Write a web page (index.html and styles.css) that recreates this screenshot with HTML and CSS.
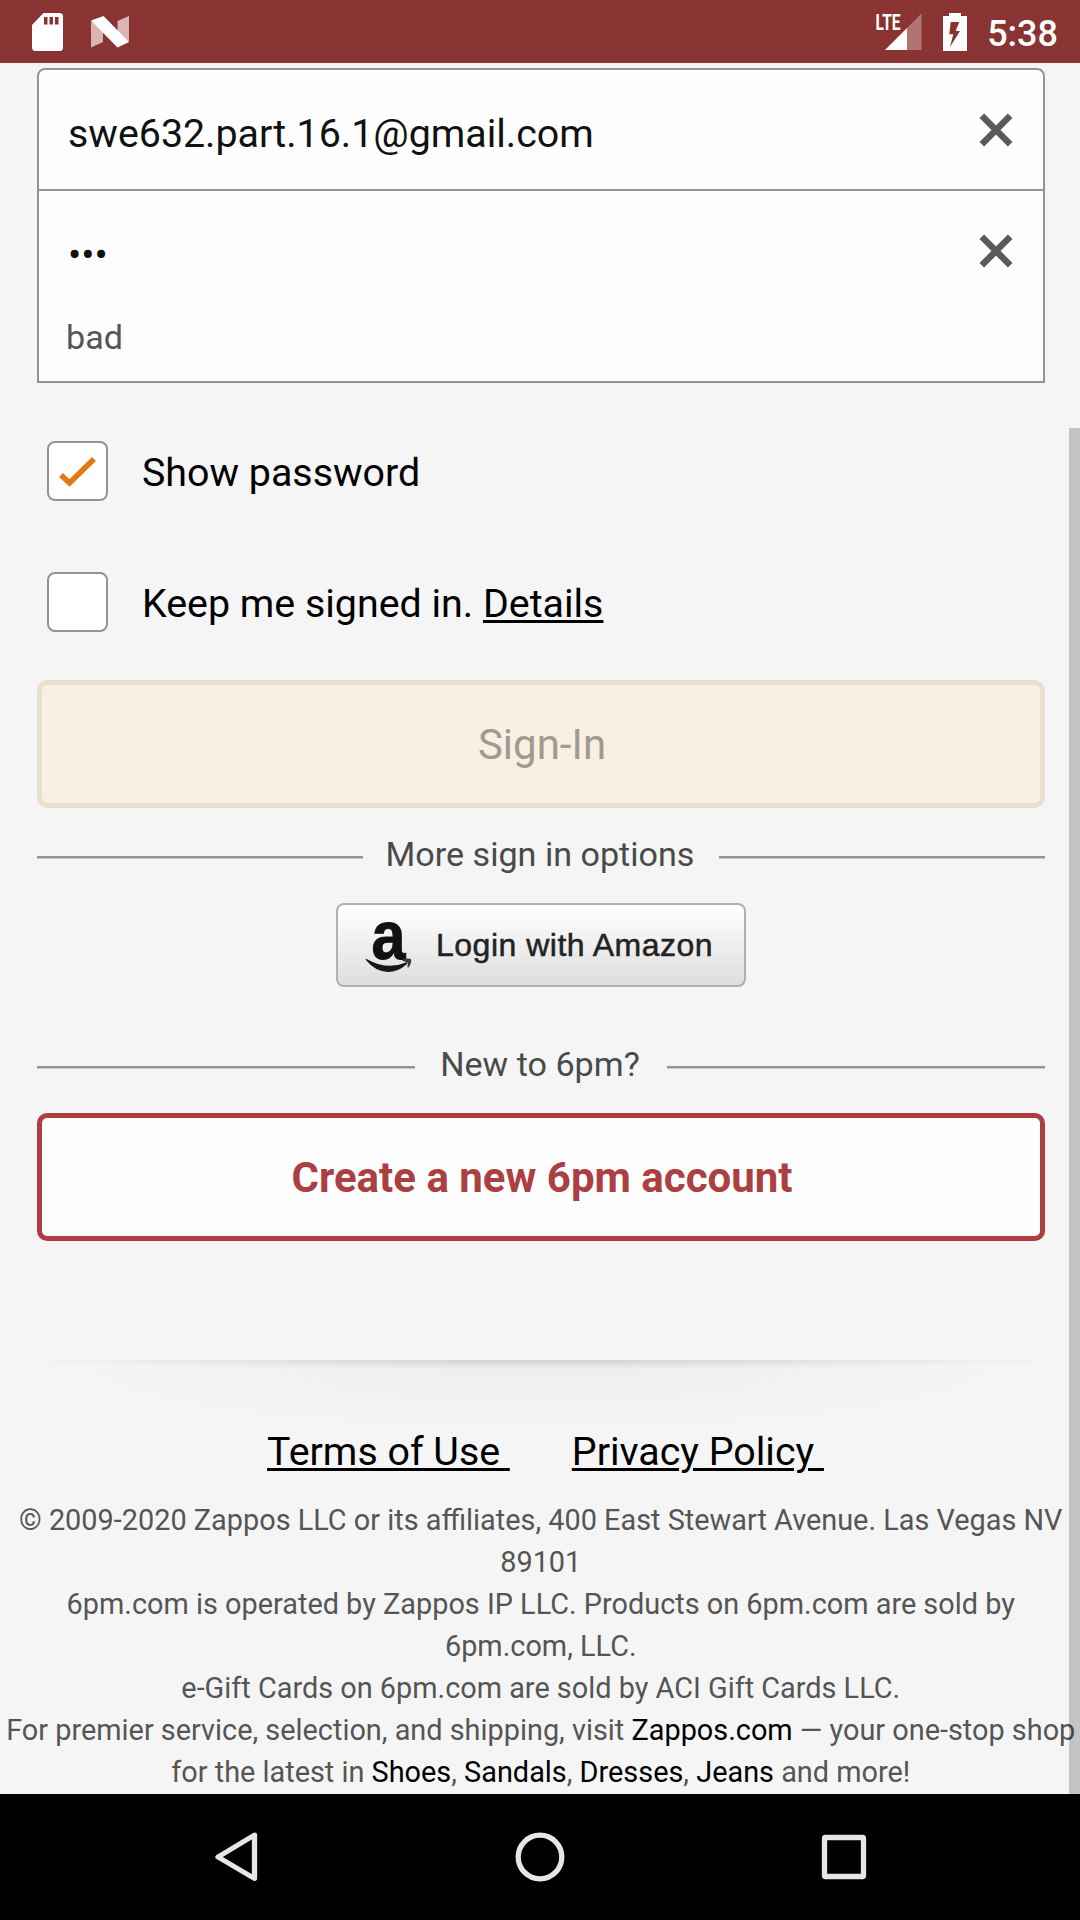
FILE: index.html
```html
<!DOCTYPE html>
<html lang="en">
<head>
<meta charset="utf-8">
<title>6pm Sign-In</title>
<link rel="stylesheet" href="styles.css">
</head>
<body>
<header class="status">
  <div class="status-left">
    <svg width="31" height="38" viewBox="0 0 31 38"><path fill="#fff" fill-rule="evenodd" d="M11.500 0H27.500Q31 0 31 3.500V34.500Q31 38 27.500 38H3.500Q0 38 0 34.500V12ZM12 4V11.500H15.500V4ZM17.500 4V11.500H21V4ZM23 4V11.500H26.500V4Z"/></svg>
    <svg width="38" height="32" viewBox="0 0 38 32"><path fill="#dcb4b4" d="M0 5L12 14V26L0 31.500ZM26.500 5L38 0V26L26.500 18Z"/><path fill="#fff" d="M0 4.500L12.500 0L38 26L26.500 31.500Z"/></svg>
  </div>
  <div class="status-right">
    <svg width="48" height="44" viewBox="-2 -3 48 44"><path fill="#fff" d="M9 37L31 15V37Z"/><path fill="#b07475" d="M31 15L45.500 0.500V37H31Z"/><text class="lte" x="-0.500" y="17" textLength="25" lengthAdjust="spacingAndGlyphs">LTE</text></svg>
    <svg width="24" height="38" viewBox="0 0 24 38"><path fill="#fff" fill-rule="evenodd" d="M6 0H18V3H24V38H0V3H6ZM7.700 9L6.300 21.300H10.300L7 34L17 18H12.700L16.300 9Z"/></svg>
    <span class="clock">5:38</span>
  </div>
</header>

<main class="screen">
  <form class="form">
    <div class="fields">
      <div class="field">
        <span class="value">swe632.part.16.1@gmail.com</span>
        <svg class="clear" width="36" height="36" viewBox="0 0 36 36"><path d="M3.800 3.800L32.200 32.200M32.200 3.800L3.800 32.200"/></svg>
      </div>
      <div class="field second">
        <span class="value">•••</span>
        <svg class="clear" width="36" height="36" viewBox="0 0 36 36"><path d="M3.800 3.800L32.200 32.200M32.200 3.800L3.800 32.200"/></svg>
      </div>
      <div class="preview">bad</div>
    </div>

    <div class="check-row">
      <span class="box"><svg width="56" height="56" viewBox="3 2 56 56"><path d="M15 34L23.500 42L48 18"/></svg></span>
      <span class="check-label">Show password</span>
    </div>
    <div class="check-row">
      <span class="box"></span>
      <span class="check-label">Keep me signed in. <a class="link">Details</a></span>
    </div>

    <div class="button signin">Sign-In</div>

    <div class="divider"><span>More sign in options</span></div>

    <div class="amazon">
      <svg width="50" height="72" viewBox="0 -6 50 72"><text class="amazon-a" x="5.500" y="43.500" textLength="34" lengthAdjust="spacingAndGlyphs">a</text><path fill="#161616" d="M-0.500 44.500Q-0.500 43.500 1 44.200Q21 55.500 40 47.500Q42.500 47 41 49Q32 57 22 57Q9 56.500 -0.500 44.500Z"/><path fill="#3a3a3a" d="M36 45.500Q40 42.500 45 44Q46 48 42.500 52.500Q41 53 41.500 51L42 48Z"/></svg>
      <span>Login with Amazon</span>
    </div>

    <div class="divider new"><span>New to 6pm?</span></div>

    <div class="button create">Create a new 6pm account</div>
  </form>

  <footer class="footer">
    <nav class="links"><a class="link">Terms of Use </a><a class="link">Privacy Policy </a></nav>
    <p class="legal">© 2009-2020 Zappos LLC or its affiliates, 400 East Stewart Avenue. Las Vegas NV<br>89101<br>6pm.com is operated by Zappos IP LLC. Products on 6pm.com are sold by<br>6pm.com, LLC.<br>e-Gift Cards on 6pm.com are sold by ACI Gift Cards LLC.<br>For premier service, selection, and shipping, visit <a>Zappos.com</a> — your one-stop shop<br>for the latest in <a>Shoes</a>, <a>Sandals</a>, <a>Dresses</a>, <a>Jeans</a> and more!</p>
  </footer>
  <div class="scrollbar"></div>
</main>

<nav class="navbar">
  <svg width="60" height="60" viewBox="0 0 60 60"><path d="M48.500 5.500V54L12 30Z" transform="translate(0 3) scale(1 .9)"/></svg>
  <svg width="60" height="60" viewBox="0 0 60 60"><circle cx="30" cy="30" r="21.800"/></svg>
  <svg width="60" height="60" viewBox="0 0 60 60"><rect x="10.500" y="10.500" width="39" height="39" rx="1"/></svg>
</nav>
</body>
</html>
```
FILE: styles.css
```css
* { box-sizing: border-box; }

body {
  margin: 0;
  width: 1080px;
  height: 1920px;
  display: flex;
  flex-direction: column;
  overflow: hidden;
  background: #f5f5f5;
  color: #000;
  font-family: Roboto, sans-serif;
  font-size: 39.375px;
}

svg { display: block; flex: none; overflow: visible; }

.status {
  flex: none;
  height: 63px;
  padding: 0 22px 0 32px;
  display: flex;
  justify-content: space-between;
  align-items: center;
  background: #893333;
}
.status-left { display: flex; align-items: center; gap: 28px; }
.status-right { display: flex; align-items: center; }
.status-right svg + svg { margin-left: 21px; }
.lte { font: 700 22px Roboto, sans-serif; fill: #fff; }
.clock {
  margin-left: 20px;
  padding-top: 4px;
  color: #fff;
  font-size: 36px;
  font-weight: 500;
  line-height: 60px;
}

.screen {
  position: relative;
  flex: none;
  height: 1731px;
  overflow: hidden;
}
.form { padding: 5px 35px 0 37px; }

.fields {
  height: 315px;
  border: 2px solid #949494;
  border-radius: 8px 8px 0 0;
  background: #fefefe;
}
.field {
  height: 119px;
  padding: 0 29px;
  display: flex;
  justify-content: space-between;
  align-items: center;
}
.second { height: 121px; border-top: 2px solid #949494; }
.value { padding-top: 8px; color: #111; line-height: 60px; }
.clear { fill: none; stroke: #5a5a5a; stroke-width: 6.500; }
.preview {
  padding: 6px 27px 0;
  color: #555;
  font-size: 34.125px;
  line-height: 42px;
}

.check-row {
  display: flex;
  align-items: center;
  gap: 34px;
  margin-top: 58px;
  padding-left: 10px;
  height: 60px;
  line-height: 60px;
}
.check-row + .check-row { margin-top: 71px; }
.check-label { padding-top: 4px; }
.box {
  width: 61px;
  height: 60px;
  border: 2px solid #949494;
  border-radius: 8px;
  background: #fff;
}
.box path { fill: none; stroke: #e47911; stroke-width: 5.500; }
.link {
  text-decoration: underline;
  text-decoration-thickness: 2.600px;
  text-underline-offset: 3px;
}

.button {
  height: 128px;
  border: 5px solid;
  border-radius: 10px;
  display: flex;
  justify-content: center;
  align-items: center;
  font-size: 42px;
  line-height: 60px;
}
.signin {
  margin-top: 48px;
  padding: 1px 0 0 2px;
  color: #a09a91;
  background: #f8f0e3;
  border-color: #e8dfcf;
}
.create {
  margin-top: 28px;
  padding: 1px 0 0 2px;
  color: #ac3f41;
  background: #fefefe;
  border-color: #ac3f41;
  font-weight: 700;
}

.divider {
  display: flex;
  align-items: center;
  gap: 23px;
  margin-top: 25px;
  height: 42px;
  color: #4a4a4a;
  font-size: 34.125px;
  line-height: 42px;
}
.divider span { padding-right: 2px; }
.divider::before,
.divider::after {
  content: "";
  flex: 1;
  height: 2px;
  margin-top: 6px;
  background: #949494;
  box-shadow: 0 1px #c8c8c8;
}
.divider.new { margin-top: 56px; gap: 25px; }

.amazon {
  width: 410px;
  height: 84px;
  margin: 28px auto 0;
  padding: 0 0 0 28px;
  display: flex;
  align-items: center;
  border: 2px solid #b0b0b0;
  border-radius: 8px;
  background: linear-gradient(#fff, #dedede);
  color: #222;
  font: 32px/60px "Liberation Sans", sans-serif;
}
.amazon span { margin-left: 20px; letter-spacing: 0.500px; -webkit-text-stroke: 0.500px #222; }
.amazon-a { font: 700 68px "Liberation Sans", sans-serif; fill: #111; stroke: #111; stroke-width: 1; }

.footer {
  margin-top: 119px;
  padding-top: 62px;
  text-align: center;
  background:
    radial-gradient(ellipse 540px 9px at 50% 0, rgba(0, 0, 0, 0.120), transparent),
    radial-gradient(ellipse 500px 75px at 50% 0, rgba(0, 0, 0, 0.030), transparent);
}
.links {
  display: flex;
  justify-content: center;
  gap: 62px;
  padding-left: 11px;
  line-height: 60px;
  white-space: pre;
}
.legal {
  margin: 17px 0 0;
  padding-left: 1.500px;
  color: #555;
  font-size: 28.875px;
  line-height: 42px;
  white-space: nowrap;
}
.legal a { color: #000; }

.scrollbar {
  position: absolute;
  top: 365px;
  right: 0;
  bottom: 0;
  width: 11px;
  background: rgba(0, 0, 0, 0.200);
}

.navbar {
  flex: none;
  height: 126px;
  background: #000;
  display: grid;
  grid-template-columns: repeat(3, 304px);
  justify-content: center;
  justify-items: center;
  align-items: center;
}
.navbar svg { fill: none; stroke: #e6e6e6; stroke-width: 5.300; stroke-linejoin: round; }
```
